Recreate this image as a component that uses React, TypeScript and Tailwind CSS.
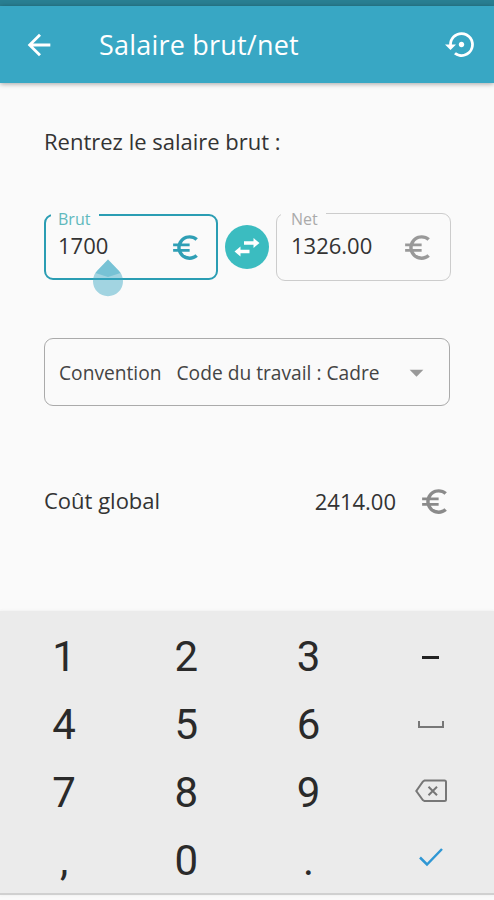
import { useState } from "react";
import {
  MdArrowBack,
  MdArrowDropDown,
  MdEuroSymbol,
  MdSettingsBackupRestore,
} from "react-icons/md";

const keys = ["1", "2", "3", "-", "4", "5", "6", "space", "7", "8", "9", "back", ",", "0", ".", "ok"];

function KeyLabel({ name }: { name: string }) {
  if (name === "-") {
    return <span className="h-[3px] w-[17px] bg-[#222]" />;
  }
  if (name === "space") {
    return (
      <svg width="28" height="10" viewBox="0 0 28 10" fill="none" stroke="#777" strokeWidth="2">
        <path d="M2 1v6h24V1" />
      </svg>
    );
  }
  if (name === "back") {
    return (
      <svg width="34" height="24" viewBox="0 0 34 24" fill="none" stroke="#777" strokeWidth="2" className="-translate-y-0.5">
        <path d="M10.5 1.5H30.5Q32 1.5 32 3V20.5Q32 22 30.5 22H10.5L8.8 21L2.3 12L8.8 2.7Z" />
        <path d="M14.5 7.8L23 16.3M23 7.8L14.5 16.3" />
      </svg>
    );
  }
  if (name === "ok") {
    return (
      <svg width="26" height="20" viewBox="0 0 26 20" fill="none" stroke="#2f97d4" strokeWidth="2.5" className="-translate-y-1">
        <path d="M2 10.5L9 17.5L24 2" />
      </svg>
    );
  }
  return <span>{name}</span>;
}

export default function App() {
  const [brut, setBrut] = useState("1700");

  const press = (key: string) => {
    if (key === "back") setBrut(brut.slice(0, -1));
    else if (/^[0-9.,]$/.test(key)) setBrut(brut + key);
  };

  return (
    <div className="flex h-[900px] w-[494px] flex-col overflow-hidden bg-[#fafafa] font-['Open_Sans',sans-serif] text-[#333]">
      <div className="h-[6px] shrink-0 bg-[#297f92]" />
      <header className="relative flex h-[77px] shrink-0 items-center bg-[#38a7c4] pr-[16px] pl-[22px] text-white shadow-[0_1px_5px_rgba(0,0,0,0.35)]">
        <MdArrowBack size={34} />
        <h1 className="ml-[43px] flex-1 text-[27px] leading-none tracking-[0.2px]">Salaire brut/net</h1>
        <MdSettingsBackupRestore size={33} />
      </header>

      <main className="flex h-[528px] shrink-0 flex-col pr-[43px] pl-11">
        <p className="mt-[42px] text-[22px] leading-8">Rentrez le salaire brut :</p>

        <div className="mt-[56px] flex h-[68px] items-center">
          <div className="relative flex h-[66px] w-[174px] items-center rounded-[9px] border-[2.5px] border-[#2a9db3] pr-[14px] pl-3">
            <label className="absolute -top-[5px] left-[5px] bg-[#fafafa] pr-[9px] pl-[7px] text-base leading-4 text-[#5fb9bd]">Brut</label>
            <span className="flex-1 -translate-y-0.5 text-[22px] leading-none">{brut}</span>
            <MdEuroSymbol size={33} className="text-[#2f9fb5]" />
            <svg width="30" height="38" viewBox="0 0 30 38" className="absolute top-[43px] left-[47px]">
              <path d="M15 0.5L25.6 11.6A15 15 0 1 1 4.4 11.6Z" fill="#38a7c4" fillOpacity="0.45" />
              <path d="M15 0.5L25.6 11.6L27.5 14L15 18L2.5 14L4.4 11.6Z" fill="#38a7c4" fillOpacity="0.4" />
            </svg>
          </div>

          <button className="mx-[7px] flex size-11 items-center justify-center rounded-full bg-[#3bbcc0] text-white">
            <svg width="26" height="20" viewBox="0 0 26 20" fill="currentColor">
              <path d="M10 4.2H19.5V1L25.5 6L19.5 11V7.8H10Z" />
              <path d="M15.5 12.7H6.5V9.5L0.5 14.5L6.5 19.5V16.3H15.5Z" />
            </svg>
          </button>

          <div className="relative flex h-[68px] w-[175px] items-center rounded-[9px] border border-[#ccc] pr-4 pl-[14px]">
            <label className="absolute -top-[3px] left-1 bg-[#fafafa] pr-2 pl-[10px] text-base leading-4 text-[#aaa]">Net</label>
            <span className="flex-1 -translate-y-0.5 text-[22px] leading-none">1326.00</span>
            <MdEuroSymbol size={33} className="text-[#999]" />
          </div>
        </div>

        <div className="mt-[57px] flex h-[68px] w-[406px] items-center rounded-[9px] border border-[#aaa] pr-4 pl-[14px] text-[19.2px] text-[#444]">
          <span className="translate-y-px">Convention</span>
          <span className="ml-[15px] flex-1 translate-y-px whitespace-nowrap">Code du travail : Cadre</span>
          <MdArrowDropDown size={33} className="text-[#999]" />
        </div>

        <div className="mt-[79px] flex items-center text-[22px] leading-[33px]">
          <span className="flex-1 -translate-y-px">Coût global</span>
          <span>2414.00</span>
          <MdEuroSymbol size={33} className="ml-[22px] text-[#8a8a8a]" />
        </div>
      </main>

      <div className="grid h-[284px] shrink-0 grid-cols-4 grid-rows-[68px_68px_68px_68px] border-b-2 border-[#d0d0d0] bg-[#ebebeb] pt-[12px] pr-[2px] pl-[3px] font-['Roboto',sans-serif] text-[42px] leading-none text-[#2a2a2a] shadow-[0_0_3px_#ebebeb]">
        {keys.map((key) => (
          <button key={key} onClick={() => press(key)} className="flex items-center justify-center">
            <KeyLabel name={key} />
          </button>
        ))}
      </div>
    </div>
  );
}
